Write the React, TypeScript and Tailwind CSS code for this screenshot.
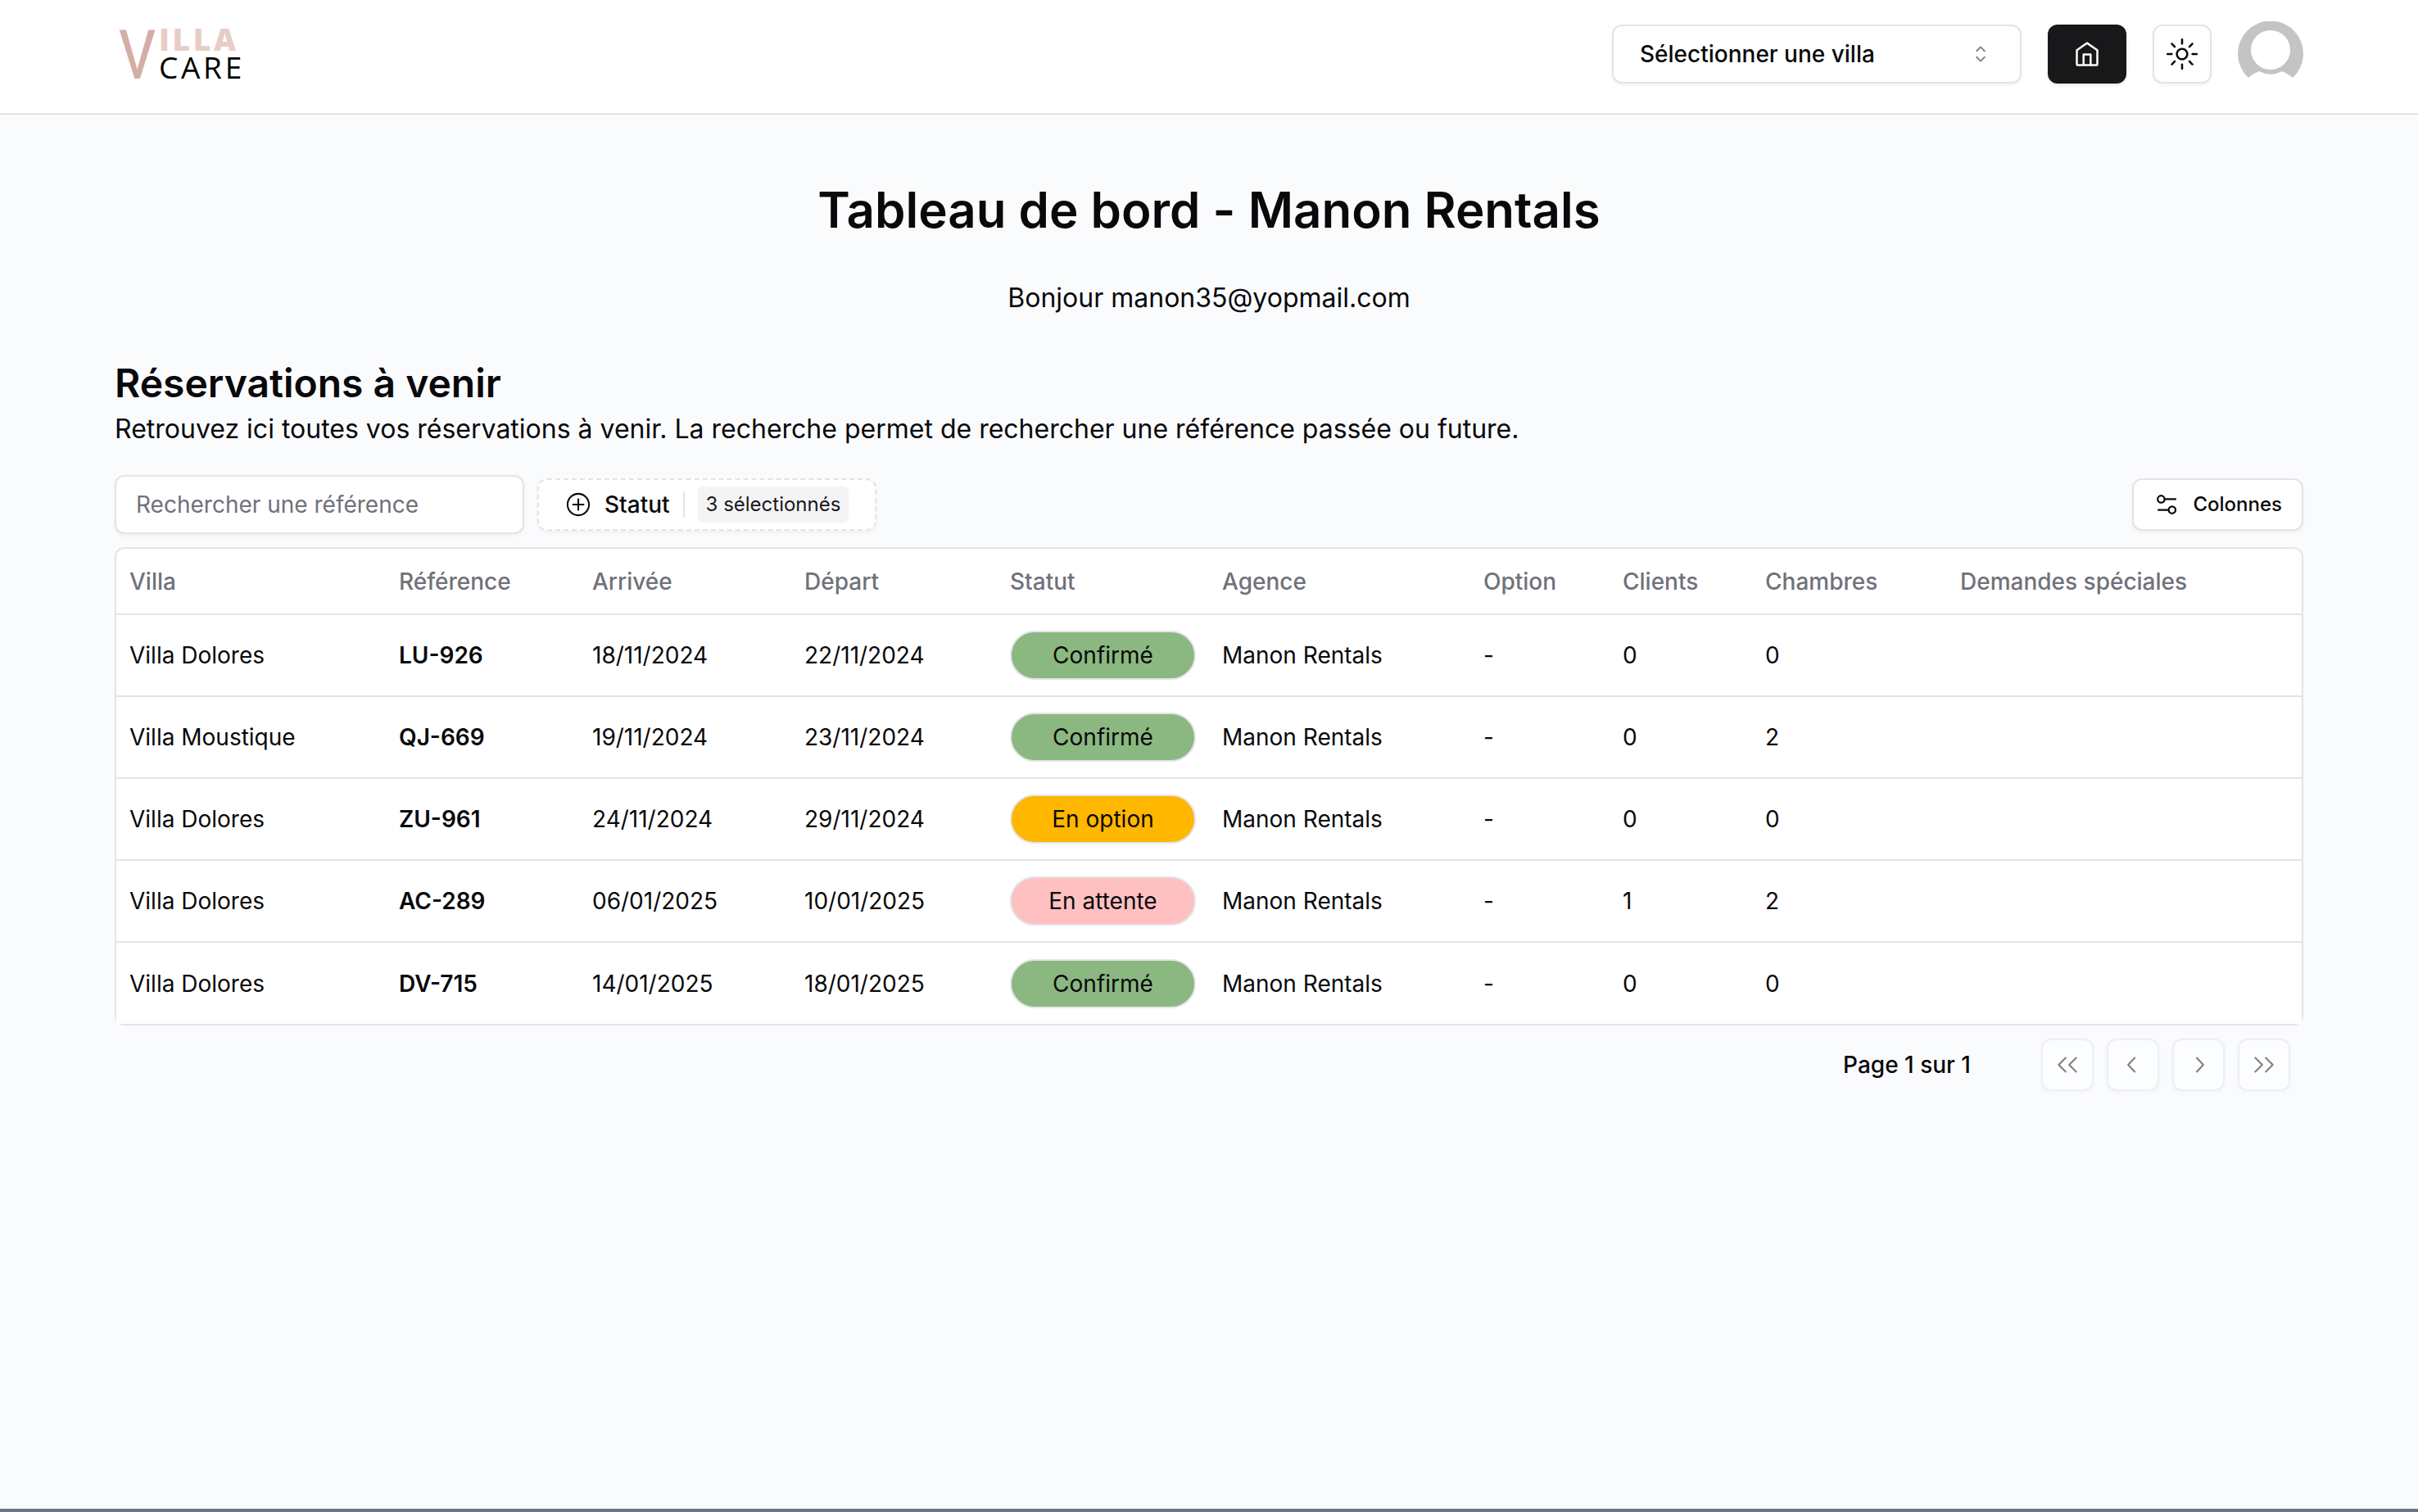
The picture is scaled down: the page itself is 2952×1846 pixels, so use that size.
import React, { useState } from 'react';
import {
  RxCaretSort,
  RxChevronLeft,
  RxChevronRight,
  RxDoubleArrowLeft,
  RxDoubleArrowRight,
  RxPlusCircled,
  RxSun,
} from 'react-icons/rx';

type Status = 'confirmed' | 'option' | 'pending';

interface Booking {
  villa: string;
  reference: string;
  arrival: string;
  departure: string;
  status: Status;
  agency: string;
  option: string;
  guests: number;
  rooms: number;
  requests: string;
}

const bookings: Booking[] = [
  { villa: 'Villa Dolores', reference: 'LU-926', arrival: '18/11/2024', departure: '22/11/2024', status: 'confirmed', agency: 'Manon Rentals', option: '-', guests: 0, rooms: 0, requests: '' },
  { villa: 'Villa Moustique', reference: 'QJ-669', arrival: '19/11/2024', departure: '23/11/2024', status: 'confirmed', agency: 'Manon Rentals', option: '-', guests: 0, rooms: 2, requests: '' },
  { villa: 'Villa Dolores', reference: 'ZU-961', arrival: '24/11/2024', departure: '29/11/2024', status: 'option', agency: 'Manon Rentals', option: '-', guests: 0, rooms: 0, requests: '' },
  { villa: 'Villa Dolores', reference: 'AC-289', arrival: '06/01/2025', departure: '10/01/2025', status: 'pending', agency: 'Manon Rentals', option: '-', guests: 1, rooms: 2, requests: '' },
  { villa: 'Villa Dolores', reference: 'DV-715', arrival: '14/01/2025', departure: '18/01/2025', status: 'confirmed', agency: 'Manon Rentals', option: '-', guests: 0, rooms: 0, requests: '' },
];

const columns = [
  { label: 'Villa', width: 'w-[329px]' },
  { label: 'Référence', width: 'w-[236px]' },
  { label: 'Arrivée', width: 'w-[259px]' },
  { label: 'Départ', width: 'w-[251px]' },
  { label: 'Statut', width: 'w-[259px]' },
  { label: 'Agence', width: 'w-[319px]' },
  { label: 'Option', width: 'w-[170px]' },
  { label: 'Clients', width: 'w-[174px]' },
  { label: 'Chambres', width: 'w-[238px]' },
  { label: 'Demandes spéciales', width: 'w-[433px]' },
];

const statusStyles: Record<Status, { label: string; className: string }> = {
  confirmed: { label: 'Confirmé', className: 'bg-[#8ab880]' },
  option: { label: 'En option', className: 'bg-[#ffb700]' },
  pending: { label: 'En attente', className: 'bg-[#ffc0c2]' },
};

const StatusBadge = ({ status }: { status: Status }) => {
  const { label, className } = statusStyles[status];

  return (
    <div className={`flex h-[60px] items-center justify-center rounded-full border-2 border-[#e4e4e7] ${className}`}>
      {label}
    </div>
  );
};

const Logo = () => (
  <svg className="h-20 w-44 overflow-visible" viewBox="0 0 176 80" role="img" aria-label="Villa Care">
    <text x="4" y="70" fontSize="84" fill="#d4aea6" className="font-['Liberation_Sans_Narrow','Roboto_Condensed','Open_Sans',sans-serif]">V</text>
    <text x="54" y="36" fontSize="37" fontWeight="800" fill="#e8cdc5" className="font-['Open_Sans',sans-serif] tracking-widest">ILLA</text>
    <text x="54" y="70" fontSize="37" fill="#000" className="font-['Open_Sans',sans-serif] tracking-widest">CARE</text>
  </svg>
);

const HomeIcon = () => (
  <svg className="size-8" viewBox="0 0 32 32" fill="none" stroke="currentColor" strokeWidth="2.5" strokeLinejoin="round">
    <path d="M3.5 11.2L16 2.6L28.5 11.2V28a1.6 1.6 0 0 1-1.6 1.6H5.1A1.6 1.6 0 0 1 3.5 28Z" />
    <path d="M11.7 29V16.4H20.3V29" />
  </svg>
);

const SlidersIcon = () => (
  <svg className="size-8" viewBox="0 0 32 32" fill="none" stroke="currentColor" strokeWidth="2.2" strokeLinecap="round">
    <circle cx="9.4" cy="9.4" r="4.2" />
    <path d="M13.6 9.4H27" />
    <circle cx="22.8" cy="22.6" r="4.2" />
    <path d="M6 22.6H18.6" />
  </svg>
);

const Avatar = () => (
  <svg className="size-20" viewBox="0 0 80 80" fill="none">
    <path d="M13 69A40 40 0 1 1 67 69Q62 64 54 61A30 30 0 0 1 26 61Q18 64 13 69Z" fill="#c4c4c4" />
    <circle cx="40" cy="35" r="24" fill="#fff" />
  </svg>
);

const Header = () => (
  <header className="border-b-2 border-[#e4e4e7] bg-white">
    <div className="mx-auto flex max-w-[2800px] items-center justify-between px-16 pt-[26px] pb-8">
      <a href="#" aria-label="Villa Care">
        <Logo />
      </a>
      <div className="flex items-center gap-8">
        <div className="relative">
          <select
            aria-label="Sélectionner une villa"
            className="h-[72px] w-[500px] appearance-none rounded-xl border-2 border-[#e4e4e7] bg-white px-8 text-[28px] font-medium shadow-[0_2px_4px_rgba(0,0,0,0.05)]"
          >
            <option>Sélectionner une villa</option>
          </select>
          <RxCaretSort className="pointer-events-none absolute top-5 right-[34px] size-8 opacity-50" />
        </div>
        <button aria-label="Accueil" className="flex h-[72px] w-24 items-center justify-center rounded-xl bg-[#18181b] text-[#fafafa] shadow-[0_2px_4px_rgba(0,0,0,0.1)]">
          <HomeIcon />
        </button>
        <button aria-label="Changer de thème" className="flex size-[72px] items-center justify-center rounded-xl border-2 border-[#e4e4e7] bg-white shadow-[0_2px_4px_rgba(0,0,0,0.05)]">
          <RxSun className="size-[38px]" />
        </button>
        <button aria-label="Mon compte">
          <Avatar />
        </button>
      </div>
    </div>
  </header>
);

const pageButtons = [
  { label: 'Première page', icon: RxDoubleArrowLeft },
  { label: 'Page précédente', icon: RxChevronLeft },
  { label: 'Page suivante', icon: RxChevronRight },
  { label: 'Dernière page', icon: RxDoubleArrowRight },
];

const Pagination = () => (
  <div className="mt-4 flex items-center justify-end px-4">
    <div className="mr-[86px] text-[28px] font-medium">Page 1 sur 1</div>
    <div className="flex gap-4">
      {pageButtons.map(({ label, icon: Icon }) => (
        <button
          key={label}
          aria-label={label}
          disabled
          className="flex size-16 items-center justify-center rounded-xl border-2 border-[#e4e4e7] bg-white opacity-50 shadow-[0_2px_4px_rgba(0,0,0,0.05)]"
        >
          <Icon className="size-8" />
        </button>
      ))}
    </div>
  </div>
);

export default function App() {
  const [search, setSearch] = useState('');

  const rows = bookings.filter((b) => b.reference.toLowerCase().includes(search.toLowerCase()));

  return (
    <div className="flex min-h-screen flex-col bg-[#fafbfd] font-[Inter,sans-serif] text-[#09090b]">
      <Header />
      <main className="mx-auto w-full max-w-[2800px] flex-1 px-16 pt-20">
        <h1 className="text-center text-[60px] leading-[72px] font-semibold [font-feature-settings:'calt'_0]">
          Tableau de bord - Manon Rentals
        </h1>
        <p className="mt-12 text-center text-[32px] leading-[48px]">Bonjour manon35@yopmail.com</p>

        <h2 className="mt-12 text-[48px] leading-[64px] font-semibold">Réservations à venir</h2>
        <p className="text-[32px] leading-[48px]">
          Retrouvez ici toutes vos réservations à venir. La recherche permet de rechercher une référence passée ou future.
        </p>

        <div className="mt-8 flex items-center gap-4">
          <input
            type="text"
            aria-label="Rechercher une référence"
            placeholder="Rechercher une référence"
            value={search}
            onChange={(e) => setSearch(e.target.value)}
            className="h-[72px] w-[500px] rounded-xl border-2 border-[#e4e4e7] bg-white px-6 text-[28px] shadow-[0_2px_4px_rgba(0,0,0,0.05)] placeholder:text-[#71717a]"
          />
          <button className="flex h-16 items-center rounded-xl border-2 border-dashed border-[#e4e4e7] bg-white px-8 text-[28px] font-medium shadow-[0_2px_4px_rgba(0,0,0,0.05)]">
            <RxPlusCircled className="mr-4 size-8" />
            Statut
            <span className="mx-4 h-8 w-[2px] bg-[#e4e4e7]" />
            <span className="flex h-11 items-center rounded-md bg-[#f4f4f5] px-[10px] text-[24px] font-normal text-[#18181b]">
              3 sélectionnés
            </span>
          </button>
          <button className="ml-auto flex h-16 items-center gap-4 rounded-xl border-2 border-[#e4e4e7] bg-white px-6 text-[24px] font-medium shadow-[0_2px_4px_rgba(0,0,0,0.05)]">
            <SlidersIcon />
            Colonnes
          </button>
        </div>

        <div className="mt-4 rounded-xl border-2 border-[#e4e4e7] bg-white">
          <table className="w-full table-fixed text-left text-[28px] leading-[40px]">
            <thead>
              <tr className="h-20 border-b-2 border-[#e4e4e7]">
                {columns.map((column) => (
                  <th key={column.label} className={`px-4 font-medium text-[#71717a] ${column.width}`}>
                    {column.label}
                  </th>
                ))}
              </tr>
            </thead>
            <tbody>
              {rows.map((b) => (
                <tr key={b.reference} className="h-[100px] border-b-2 border-[#e4e4e7] bg-white last:border-0">
                  <td className="px-4">{b.villa}</td>
                  <td className="px-4 font-semibold">{b.reference}</td>
                  <td className="px-4">{b.arrival}</td>
                  <td className="px-4">{b.departure}</td>
                  <td className="px-4">
                    <StatusBadge status={b.status} />
                  </td>
                  <td className="px-4">{b.agency}</td>
                  <td className="px-4">{b.option}</td>
                  <td className="px-4">{b.guests}</td>
                  <td className="px-4">{b.rooms}</td>
                  <td className="px-4">{b.requests}</td>
                </tr>
              ))}
            </tbody>
          </table>
        </div>

        <Pagination />
      </main>
      <footer className="h-1 bg-[#6b7883]" />
    </div>
  );
}
